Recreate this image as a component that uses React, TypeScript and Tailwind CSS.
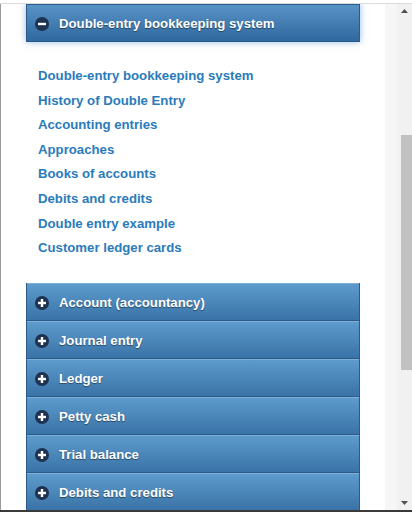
import { FC } from "react";

const links = [
  "Double-entry bookkeeping system",
  "History of Double Entry",
  "Accounting entries",
  "Approaches",
  "Books of accounts",
  "Debits and credits",
  "Double entry example",
  "Customer ledger cards",
];

const sections = [
  "Account (accountancy)",
  "Journal entry",
  "Ledger",
  "Petty cash",
  "Trial balance",
  "Debits and credits",
];

const ToggleIcon: FC<{ open?: boolean }> = ({ open }) => (
  <svg width="14" height="14" viewBox="0 0 14 14" className="shrink-0">
    <circle cx="7" cy="7" r="7" fill="#1d3350" />
    <rect x="3" y="5.8" width="8" height="2.4" fill="#fff" />
    {!open && <rect x="5.8" y="3" width="2.4" height="8" fill="#fff" />}
  </svg>
);

const App: FC = () => {
  return (
    <div className="w-[412px] h-[512px] bg-white pt-[3px] border-b-2 border-[#3a3a3a] overflow-hidden font-['Liberation_Sans',Arial,sans-serif]">
      <div className="flex h-full border-t border-[#dcdcdc]">
        <div className="w-px bg-[#9a9a9a]" />
        <div className="flex-1 px-[25px] overflow-hidden">
          <div className="flex items-center gap-[10px] h-[38px] pl-[8px] pt-px bg-gradient-to-b from-[#5893c6] to-[#2f689e] border border-[#2a5b8a] shadow-[0_0_7px_rgba(70,130,210,0.55)]">
            <ToggleIcon open />
            <span className="text-white font-bold text-[13.2px] [text-shadow:0_1px_1px_rgba(0,0,0,0.45)]">
              Double-entry bookkeeping system
            </span>
          </div>

          <ul className="pl-3 pt-[22px] pb-[22px]">
            {links.map((l) => (
              <li key={l} className="leading-[24.6px] text-[13.2px] font-bold text-[#2b7bbb]">
                {l}
              </li>
            ))}
          </ul>

          <div className="border-x border-[#2a5b8a]">
            {sections.map((s) => (
              <div
                key={s}
                className="flex items-center gap-[10px] h-[38px] pl-[8px] pt-[2px] bg-gradient-to-b from-[#5d9bcc] to-[#3a73a7] border-t border-t-[#7fb0d9] border-b border-b-[#2b5b89]"
              >
                <ToggleIcon />
                <span className="text-white font-bold text-[13.2px] [text-shadow:0_1px_1px_rgba(0,0,0,0.45)]">
                  {s}
                </span>
              </div>
            ))}
          </div>
        </div>

        <div className="w-[12px] bg-[#f6f6f6]" />
        <div className="w-[15px] bg-[#f1f1f1] flex flex-col items-center">
          <svg width="7" height="4" viewBox="0 0 7 4" className="mt-[5px] mb-[6px]">
            <polygon points="3.5,0 7,4 0,4" fill="#505050" />
          </svg>
          <div className="w-[11px] ml-[4px] mt-[116px] h-[235px] bg-[#c1c1c1]" />
          <div className="flex-1" />
          <svg width="7" height="4" viewBox="0 0 7 4" className="mb-[5px]">
            <polygon points="0,0 7,0 3.5,4" fill="#505050" />
          </svg>
        </div>
      </div>
    </div>
  );
};

export default App;
